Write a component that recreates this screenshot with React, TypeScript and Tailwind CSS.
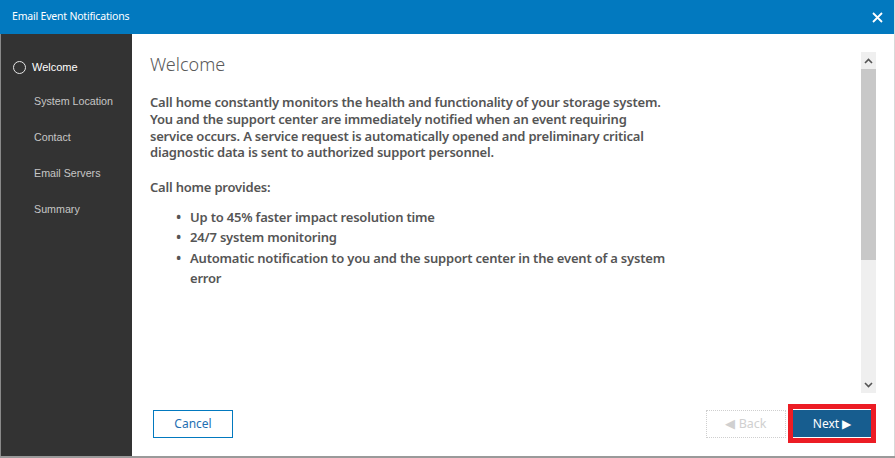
import React from "react";

const font = { fontFamily: '"Noto Sans", "Open Sans", sans-serif' };
const side = { fontFamily: '"Liberation Sans", Arial, sans-serif' };

export default function App() {
  const steps = ["System Location", "Contact", "Email Servers", "Summary"];
  const para = [
    "Call home constantly monitors the health and functionality of your storage system.",
    "You and the support center are immediately notified when an event requiring",
    "service occurs. A service request is automatically opened and preliminary critical",
    "diagnostic data is sent to authorized support personnel.",
  ];
  return (
    <div className="w-[895px] h-[458px] bg-white flex flex-col overflow-hidden" style={font}>
      <div className="w-[895px] h-[456px] flex flex-col border-r border-[#d9d9d9]">
        <div className="h-[34px] bg-[#0279bf] flex items-center justify-between pl-[12px] pr-[10px] shrink-0">
          <span className="text-white text-[10.5px] tracking-[-0.2px]">Email Event Notifications</span>
          <svg width="11" height="11" viewBox="0 0 11 11" className="mr-[1px]">
            <path d="M1 1 L10 10 M10 1 L1 10" stroke="white" strokeWidth="1.8" />
          </svg>
        </div>
        <div className="flex flex-1 min-h-0">
          <div className="w-[132px] bg-[#333333] border-l border-[#8a8a8a] shrink-0 pt-[24px]" style={side}>
            <div className="flex items-center h-[18px] pl-[12px]">
              <span className="w-[13px] h-[13px] rounded-full border border-[#e6e6e6] mr-[6px]" />
              <span className="text-white text-[11px]">Welcome</span>
            </div>
            {steps.map((s, i) => (
              <div
                key={s}
                className={`h-[18px] ${i === 0 ? "mt-[16px]" : "mt-[18px]"} pl-[33px] flex items-center text-[#c6c6c6] text-[10.7px]`}
              >
                {s}
              </div>
            ))}
          </div>
          <div className="flex-1 flex flex-col">
            <div className="flex flex-1 pt-[18px]">
              <div className="flex-1 pl-[18px] text-[#555555]">
                <h1 className="text-[18px] leading-[24px] text-[#5a5a5a]" style={{ fontWeight: 300 }}>
                  Welcome
                </h1>
                <p className="mt-[18px] text-[13px] leading-[16.8px] font-semibold tracking-[-0.2px] whitespace-nowrap">
                  {para.map((l) => (
                    <span key={l} className="block">{l}</span>
                  ))}
                </p>
                <p className="mt-[18px] text-[13px] leading-[17px] font-semibold tracking-[-0.2px]">Call home provides:</p>
                <ul className="mt-[11px] pl-[26px] text-[13px] leading-[20.3px] font-semibold tracking-[-0.2px] whitespace-nowrap">
                  {[
                    ["Up to 45% faster impact resolution time"],
                    ["24/7 system monitoring"],
                    ["Automatic notification to you and the support center in the event of a system", "error"],
                  ].map((t) => (
                    <li key={t[0]} className="flex">
                      <span className="w-[14px] shrink-0 text-[14px]">•</span>
                      <span>
                        {t.map((x) => (
                          <span key={x} className="block">{x}</span>
                        ))}
                      </span>
                    </li>
                  ))}
                </ul>
              </div>
              <div className="w-[15px] h-[341px] bg-[#efefef] mr-[18px] flex flex-col items-center">
                <div className="h-[17px] flex items-center justify-center">
                  <svg width="9" height="6" viewBox="0 0 9 6"><path d="M1 5 L4.5 1.5 L8 5" stroke="#555" strokeWidth="1.6" fill="none" /></svg>
                </div>
                <div className="w-[15px] h-[191px] bg-[#c8c8c8]" />
                <div className="flex-1" />
                <div className="h-[17px] flex items-center justify-center">
                  <svg width="9" height="6" viewBox="0 0 9 6"><path d="M1 1 L4.5 4.5 L8 1" stroke="#555" strokeWidth="1.6" fill="none" /></svg>
                </div>
              </div>
            </div>
            <div className="h-[63px] flex items-start pt-[11px] pl-[21px] pr-[18px]">
              <button className="mt-[6px] w-[80px] h-[28px] border border-[#0279bf] text-[#1f6fb2] text-[12px] flex items-center justify-center">
                Cancel
              </button>
              <div className="flex-1" />
              <button className="mt-[6px] w-[80px] h-[28px] border border-dotted border-[#cfcfcf] text-[#d0d0d0] text-[12.5px] flex items-center justify-center mr-[2px]">
                ◀ Back
              </button>
              <div className="w-[88px] h-[39px] bg-[#ec1c24] p-[5px]">
                <div className="w-full h-full bg-[#175d8f] border-y border-white text-white text-[12px] flex items-center justify-center">
                  Next ▶
                </div>
              </div>
            </div>
          </div>
        </div>
      </div>
      <div className="h-[2px] bg-[#9a9a9a]" />
    </div>
  );
}
